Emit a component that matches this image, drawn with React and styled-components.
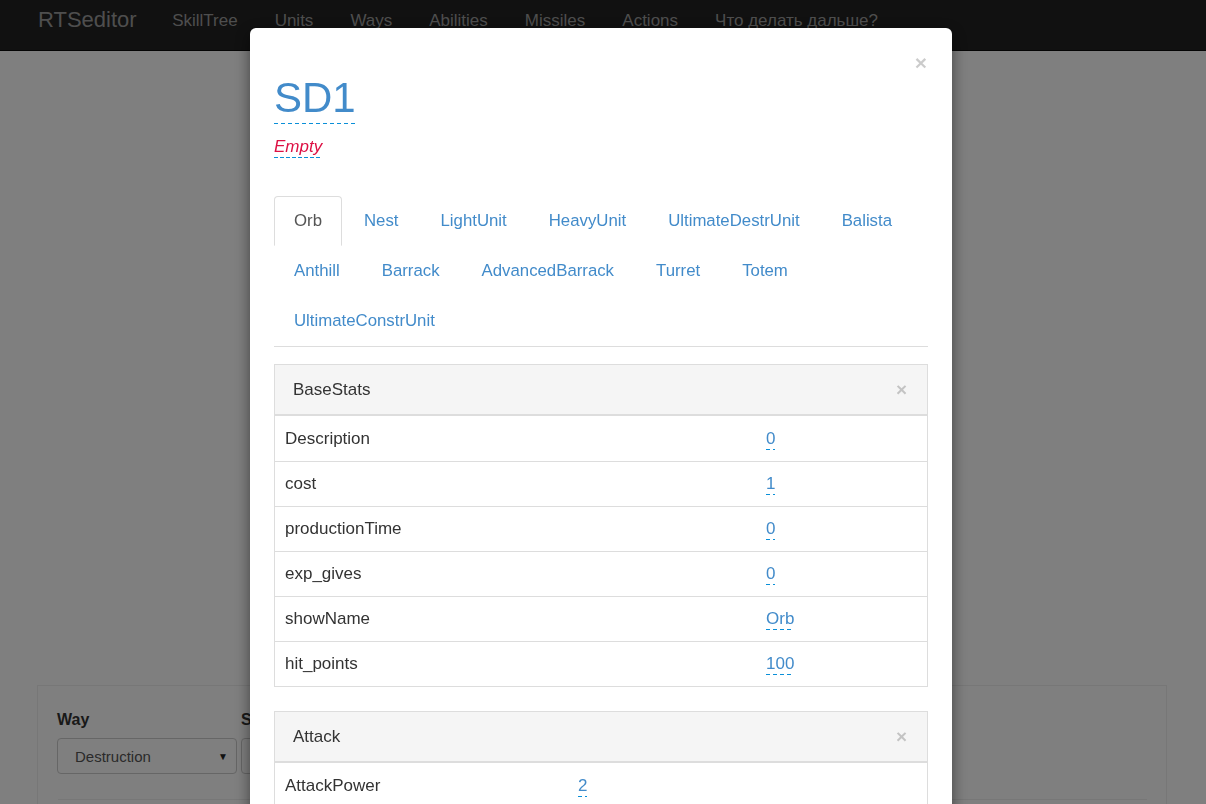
import React from 'react';
import styled, { createGlobalStyle } from 'styled-components';

const GlobalStyle = createGlobalStyle`
  html, body {
    margin: 0;
    padding: 0;
    height: 100%;
    overflow: hidden;
    background: #fff;
    font-family: "Liberation Sans", Arial, sans-serif;
    color: #333;
  }
  * { box-sizing: border-box; }
`;

const navItems = ['SkillTree', 'Units', 'Ways', 'Abilities', 'Missiles', 'Actions', 'Что делать дальше?'];
const tabs = [
  'Orb', 'Nest', 'LightUnit', 'HeavyUnit', 'UltimateDestrUnit', 'Balista',
  'Anthill', 'Barrack', 'AdvancedBarrack', 'Turret', 'Totem', 'UltimateConstrUnit',
];
const baseStats = [
  ['Description', '0'],
  ['cost', '1'],
  ['productionTime', '0'],
  ['exp_gives', '0'],
  ['showName', 'Orb'],
  ['hit_points', '100'],
];
const attack = [['AttackPower', '2']];

// x-editable style dashed underline, drawn as a background so the colour stays blue
const dashed = `
  padding-bottom: 2px;
  background-image: linear-gradient(to right, #0a8fd8 0, #0a8fd8 4px, transparent 4px);
  background-size: 7px 1px;
  background-repeat: repeat-x;
  background-position: 0 100%;
`;

const Navbar = styled.div`
  height: 51px;
  background: #222;
  border-bottom: 1px solid #080808;
  display: flex;
  align-items: center;
  padding-left: 38px;
`;
const Brand = styled.div`
  font-size: 22px;
  color: #9d9d9d;
  margin-right: 17px;
  margin-top: -10px;
`;
const NavLink = styled.div`
  font-size: 17px;
  color: #9d9d9d;
  padding: 0 18.5px;
  margin-top: -8px;
`;

const Stage = styled.div`
  height: 634px;
`;
const Well = styled.div`
  margin: 0 39px 0 37px;
  border: 1px solid #eee;
  padding: 24px 19px 0;
  height: 200px;
`;
const Fields = styled.div`
  display: flex;
  gap: 4px;
`;
const Field = styled.div`
  width: 180px;
  display: flex;
  flex-direction: column;
`;
const Label = styled.div`
  font-weight: bold;
  font-size: 16px;
  line-height: 20px;
  height: 20px;
  margin-bottom: 8px;
  white-space: nowrap;
`;
const Select = styled.div`
  height: 36px;
  border: 1px solid #ccc;
  border-radius: 4px;
  padding: 0 8px 0 17px;
  display: flex;
  align-items: center;
  justify-content: space-between;
  font-size: 15px;
  color: #555;
  background: #fff;
  span:last-child { font-size: 10px; color: #222; }
`;
const Rule = styled.div`
  margin: 25px 0 0 1px;
  border-top: 1px solid #eee;
`;

const Backdrop = styled.div`
  position: fixed;
  inset: 0;
  background: rgba(0, 0, 0, 0.5);
`;
const Dialog = styled.div`
  position: fixed;
  top: 28px;
  left: 250px;
  width: 702px;
  height: 900px;
  background: #fff;
  border-radius: 6px;
  box-shadow: 0 5px 15px rgba(0, 0, 0, 0.5);
  padding: 24px;
`;
const Header = styled.div`
  display: flex;
  justify-content: space-between;
  align-items: flex-start;
`;
const Close = styled.div`
  font-size: 21px;
  font-weight: bold;
  line-height: 1;
  color: #000;
  opacity: 0.2;
  margin-right: 1px;
`;
const Title = styled.h1`
  margin: 23px 0 15px;
  font-size: 42px;
  font-weight: normal;
  line-height: 1.1;
  color: #428bca;
  span { ${dashed} padding-bottom: 3px; }
`;
const Empty = styled.div`
  font-size: 17px;
  line-height: 22px;
  font-style: italic;
  color: #dd1144;
  span { ${dashed} background-size: 6px 1px; }
`;

const Tabs = styled.div`
  margin-top: 38px;
  display: flex;
  flex-wrap: wrap;
  border-bottom: 1px solid #ddd;
`;
const Tab = styled.div`
  height: 50px;
  padding: 0 19px;
  margin-right: 2px;
  display: flex;
  align-items: center;
  font-size: 16.8px;
  color: ${p => (p.$active ? '#555' : '#428bca')};
  border: 1px solid ${p => (p.$active ? '#ddd' : 'transparent')};
  border-bottom-color: transparent;
  border-radius: 4px 4px 0 0;
`;

const Panel = styled.div`
  margin-top: ${p => p.$top}px;
  border: 1px solid #ddd;
`;
const PanelHead = styled.div`
  height: 51px;
  background: #f5f5f5;
  border-bottom: 2px solid #ddd;
  display: flex;
  align-items: center;
  justify-content: space-between;
  padding: 0 20px 0 18px;
  font-size: 17px;
  color: #333;
`;
const PanelClose = styled.span`
  font-size: 19px;
  font-weight: bold;
  color: #000;
  opacity: 0.2;
`;
const Row = styled.div`
  display: grid;
  grid-template-columns: ${p => p.$label}px 1fr;
  height: 45px;
  align-items: center;
  font-size: 17px;
  color: #333;
  & + & { border-top: 1px solid #ddd; }
`;
const Cell = styled.div`
  padding: 0 10px;
`;
const Editable = styled.span`
  color: #428bca;
  ${dashed}
`;

const StatPanel = ({ title, rows, label, top }) => (
  <Panel $top={top}>
    <PanelHead>
      <span>{title}</span>
      <PanelClose>×</PanelClose>
    </PanelHead>
    {rows.map(([k, v]) => (
      <Row key={k} $label={label}>
        <Cell>{k}</Cell>
        <Cell><Editable>{v}</Editable></Cell>
      </Row>
    ))}
  </Panel>
);

const App = () => (
  <>
    <GlobalStyle />
    <Navbar>
      <Brand>RTSeditor</Brand>
      {navItems.map(n => <NavLink key={n}>{n}</NavLink>)}
    </Navbar>
    <Stage />
    <Well>
      <Fields>
        <Field>
          <Label>Way</Label>
          <Select><span>Destruction</span><span>▼</span></Select>
        </Field>
        <Field>
          <Label>Skill</Label>
          <Select><span>Orb</span><span>▼</span></Select>
        </Field>
      </Fields>
      <Rule />
    </Well>
    <Backdrop>
      <Dialog>
        <Header>
          <div>
            <Title><span>SD1</span></Title>
            <Empty><span>Empty</span></Empty>
          </div>
          <Close>×</Close>
        </Header>
        <Tabs>
          {tabs.map((t, i) => <Tab key={t} $active={i === 0}>{t}</Tab>)}
        </Tabs>
        <StatPanel title="BaseStats" rows={baseStats} label={481} top={17} />
        <StatPanel title="Attack" rows={attack} label={293} top={24} />
      </Dialog>
    </Backdrop>
  </>
);

export default App;
